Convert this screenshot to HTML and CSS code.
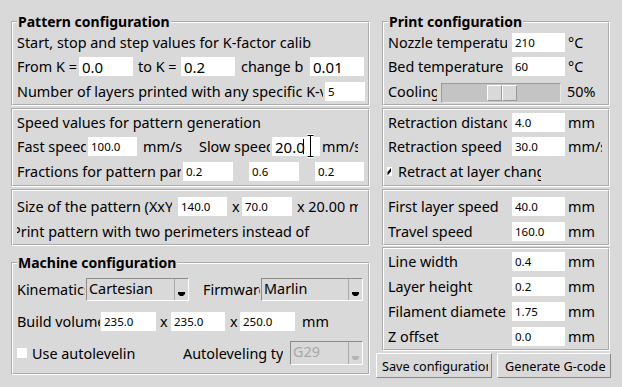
FILE: index.html
```html
<!DOCTYPE html>
<html lang="en">
<head>
    <meta charset="UTF-8">
    <meta name="viewport" content="width=device-width, initial-scale=1.0">
    <title>K-factor calibration</title>
    <link rel="stylesheet" href="styles.css">
</head>
<body>
    <div class="column">
        <fieldset class="group">
            <legend>Pattern configuration</legend>
            <div class="row short">
                <span class="lbl intro">Start, stop and step values for K-factor calibration</span>
            </div>
            <div class="row">
                <span class="lbl from-k">From K =</span>
                <input class="entry big k-entry" value="0.0">
                <span class="lbl to-k">to K =</span>
                <input class="entry big k-entry" value="0.2">
                <span class="lbl step-k">change by</span>
                <input class="entry big k-entry" value="0.01">
            </div>
            <div class="row">
                <span class="lbl layers">Number of layers printed with any specific K-value</span>
                <input class="entry layers-entry" value="5">
            </div>
        </fieldset>

        <div class="group frame">
            <div class="row short">
                <span class="lbl">Speed values for pattern generation</span>
            </div>
            <div class="row">
                <span class="lbl fast">Fast speed</span>
                <input class="entry fast-entry" value="100.0">
                <span class="lbl fast-unit">mm/s</span>
                <span class="lbl slow">Slow speed</span>
                <span class="entry-wrap">
                    <input class="entry big slow-entry" value="20.0">
                    <span class="caret"></span>
                    <svg class="ibeam" width="9" height="24" viewBox="0 0 9 24">
                        <path d="M1 1.5h7M1 22.5h7M4.5 1.5v21" stroke="#fff" stroke-width="3" fill="none"/>
                        <path d="M1.5 1.5h6M1.5 22.5h6M4.5 1.5v21" stroke="#000" stroke-width="1" fill="none"/>
                    </svg>
                </span>
                <span class="lbl slow-unit">mm/s</span>
            </div>
            <div class="row">
                <span class="lbl fractions">Fractions for pattern parts</span>
                <input class="entry frac-entry" value="0.2">
                <input class="entry frac-entry gap" value="0.6">
                <input class="entry frac-entry gap last" value="0.2">
            </div>
        </div>

        <div class="group frame third">
            <div class="row">
                <span class="lbl size">Size of the pattern (XxY)</span>
                <input class="entry size-entry" value="140.0">
                <span class="lbl times">x</span>
                <input class="entry size-entry wide" value="70.0">
                <span class="lbl size-z">x 20.00 mm</span>
            </div>
            <div class="row">
                <span class="lbl perimeters">Print pattern with two perimeters instead of one</span>
            </div>
        </div>

        <fieldset class="group machine">
            <legend>Machine configuration</legend>
            <div class="row tall">
                <span class="lbl kinematics">Kinematics</span>
                <div class="combo kin-combo">
                    <span class="combo-text">Cartesian</span>
                    <span class="combo-arrow"><svg width="7" height="4" viewBox="0 0 7 4"><path d="M0 0h7v2l-2 2h-3l-2-2z" fill="#000"/></svg></span>
                </div>
                <span class="lbl firmware">Firmware</span>
                <div class="combo fw-combo">
                    <span class="combo-text">Marlin</span>
                    <span class="combo-arrow"><svg width="7" height="4" viewBox="0 0 7 4"><path d="M0 0h7v2l-2 2h-3l-2-2z" fill="#000"/></svg></span>
                </div>
            </div>
            <div class="row tall">
                <span class="lbl volume">Build volume</span>
                <input class="entry vol-entry" value="235.0">
                <span class="lbl times vol-x">x</span>
                <input class="entry vol-entry mid" value="235.0">
                <span class="lbl times">x</span>
                <input class="entry vol-entry" value="250.0">
                <span class="lbl vol-unit">mm</span>
            </div>
            <div class="row tall">
                <span class="check"></span>
                <span class="lbl autolevel">Use autoleveling</span>
                <span class="lbl autolevel-type">Autoleveling type</span>
                <div class="combo al-combo disabled">
                    <span class="combo-text">G29</span>
                    <span class="combo-arrow"><svg width="7" height="4" viewBox="0 0 7 4"><path d="M0 0h7v2l-2 2h-3l-2-2z" fill="#b4b4b4"/></svg></span>
                </div>
            </div>
        </fieldset>
    </div>

    <div class="column">
        <fieldset class="group">
            <legend>Print configuration</legend>
            <div class="row short">
                <span class="lbl setting">Nozzle temperature</span>
                <input class="entry set-entry" value="210">
                <span class="unit">°C</span>
            </div>
            <div class="row">
                <span class="lbl setting">Bed temperature</span>
                <input class="entry set-entry" value="60">
                <span class="unit">°C</span>
            </div>
            <div class="row">
                <span class="lbl cooling">Cooling fan</span>
                <div class="scale">
                    <span class="slider"><span></span><span></span></span>
                </div>
                <span class="unit percent">50%</span>
            </div>
        </fieldset>

        <div class="group frame">
            <div class="row short">
                <span class="lbl setting">Retraction distance</span>
                <input class="entry set-entry" value="4.0">
                <span class="unit">mm</span>
            </div>
            <div class="row">
                <span class="lbl setting">Retraction speed</span>
                <input class="entry set-entry" value="30.0">
                <span class="lbl unit speed-unit">mm/s</span>
            </div>
            <div class="row">
                <span class="check-clip"><svg width="5" height="9" viewBox="0 0 5 9"><rect width="5" height="9" fill="#fff"/><path d="M0.5 5L4 1v3.5L0.5 8.5z" fill="#000"/></svg></span>
                <span class="lbl retract">Retract at layer change</span>
            </div>
        </div>

        <div class="group frame third">
            <div class="row">
                <span class="lbl setting">First layer speed</span>
                <input class="entry set-entry" value="40.0">
                <span class="unit">mm</span>
            </div>
            <div class="row">
                <span class="lbl setting">Travel speed</span>
                <input class="entry set-entry" value="160.0">
                <span class="unit">mm</span>
            </div>
        </div>

        <div class="group frame fourth">
            <div class="row">
                <span class="lbl setting">Line width</span>
                <input class="entry set-entry" value="0.4">
                <span class="unit">mm</span>
            </div>
            <div class="row">
                <span class="lbl setting">Layer height</span>
                <input class="entry set-entry" value="0.2">
                <span class="unit">mm</span>
            </div>
            <div class="row">
                <span class="lbl setting">Filament diameter</span>
                <input class="entry set-entry" value="1.75">
                <span class="unit">mm</span>
            </div>
            <div class="row">
                <span class="lbl setting">Z offset</span>
                <input class="entry set-entry" value="0.0">
                <span class="unit">mm</span>
            </div>
        </div>

        <div class="buttons">
            <button class="button save"><span class="button-text">Save configuration</span></button>
            <button class="button generate"><span class="button-text">Generate G-code</span></button>
        </div>
    </div>
</body>
</html>
```

FILE: styles.css
```css
html, body {
    height: 100%;
}
body {
    margin: 0;
    padding: 14px 0 0 11px;
    box-sizing: border-box;
    background-color: #d9d9d9;
    color: #000;
    font-family: 'Noto Sans', sans-serif;
    font-size: 14.4px;
    display: grid;
    grid-template-columns: 359px 228px;
    column-gap: 12px;
    align-items: start;
    overflow: hidden;
}
.column {
    display: flex;
    flex-direction: column;
}

/* frames, groove border like Tk */
.group {
    margin: 0;
    padding: 0 2px 0 4px;
    border: 2px groove #fff;
    min-width: 0;
}
.group legend {
    padding: 0 1px;
    font-weight: bold;
    font-size: 14px;
    line-height: 16px;
}
.frame {
    margin-top: 2px;
    padding-bottom: 1px;
}
.frame.third {
    padding-top: 3px;
    padding-bottom: 0;
}
.frame.fourth {
    margin-top: 1px;
    padding-bottom: 0;
}
.machine {
    margin-top: 9px;
    padding-top: 2px;
    padding-bottom: 4px;
}

.row {
    display: flex;
    align-items: center;
    height: 25px;
    white-space: nowrap;
}
.row.short {
    height: 24px;
}
.row.tall {
    height: 32px;
}

/* labels are cut at a fixed width, like Tk labels */
.lbl {
    flex: none;
    overflow: hidden;
    white-space: nowrap;
}
.intro { width: 295px; }
.from-k { width: 62px; }
.to-k { width: 43px; padding-left: 5px; }
.step-k { width: 62px; padding-left: 6px; margin-right: 7px; }
.layers { width: 306px; margin-right: 2px; }
.fast { width: 69px; margin-right: 2px; }
.fast-unit { width: 40px; padding-left: 6px; }
.slow { width: 71px; padding-left: 16px; margin-right: 2px; }
.slow-unit { width: 36px; padding-left: 2px; }
.fractions { width: 164px; margin-right: 2px; }
.size { width: 155px; margin-right: 6px; }
.times { width: 10px; padding-left: 5px; }
.vol-x { width: 11px; padding-left: 4px; }
.size-z { width: 61px; padding-left: 5px; }
.perimeters { width: 294px; text-indent: -5px; }
.kinematics { width: 68px; margin-right: 1px; }
.firmware { width: 57px; padding-left: 14px; margin-right: 1px; }
.volume { width: 83px; margin-right: 1px; }
.vol-unit { padding-left: 7px; }
.autolevel { width: 104px; margin-left: 5px; }
.autolevel-type { width: 100px; margin-left: 47px; margin-right: 7px; }
.setting { width: 119px; margin-right: 5px; }
.cooling { width: 49px; margin-right: 4px; }
.speed-unit { width: 34px; }
.retract { width: 143px; margin-left: 6px; }

.unit {
    padding-left: 3px;
}
.unit.percent {
    padding-left: 6px;
}

/* entries */
.entry {
    flex: none;
    box-sizing: border-box;
    height: 19px;
    margin: 0;
    border: 0;
    padding: 0 0 0 3px;
    background: #fff;
    color: #000;
    font-family: 'Noto Sans', sans-serif;
    font-size: 11.5px;
    outline: none;
}
.entry.big {
    font-size: 15px;
}
.k-entry { width: 54px; }
.layers-entry { width: 40px; }
.fast-entry { width: 49px; }
.frac-entry { width: 50px; }
.frac-entry.gap { margin-left: 16px; }
.frac-entry.last { width: 49px; }
.size-entry { width: 49px; }
.size-entry.wide { width: 50px; }
.vol-entry { width: 55px; }
.vol-entry.mid { width: 54px; }
.set-entry { width: 53px; }

.entry-wrap {
    position: relative;
    display: flex;
}
.slow-entry { width: 48px; }
.caret {
    position: absolute;
    left: 31px;
    top: 2px;
    width: 1px;
    height: 15px;
    background: #000;
}
.ibeam {
    position: absolute;
    left: 34px;
    top: -3px;
}

/* combobox */
.combo {
    flex: none;
    display: flex;
    box-sizing: border-box;
    height: 23px;
    border: 1px solid;
    border-color: #8d8d8d #fff #fff #8d8d8d;
}
.combo-text {
    flex: 1;
    padding-left: 2px;
    line-height: 20px;
    overflow: hidden;
}
.combo-arrow {
    width: 14px;
    border-left: 1px solid #a9a9a9;
    display: flex;
    justify-content: center;
    align-items: flex-end;
    padding-bottom: 4px;
    box-sizing: border-box;
}
.kin-combo { width: 103px; }
.fw-combo { width: 102px; }
.al-combo { width: 73px; height: 24px; }
.combo.disabled .combo-text {
    color: #a8a8a8;
}

/* checkboxes */
.check {
    flex: none;
    width: 10px;
    height: 10px;
    background: #fff;
}
.check-clip {
    flex: none;
    display: flex;
    margin-left: -1px;
}

/* cooling fan scale */
.scale {
    flex: none;
    display: flex;
    align-items: center;
    box-sizing: border-box;
    width: 120px;
    height: 20px;
    margin-top: 2px;
    padding-left: 45px;
    background: #c4c4c4;
    border: 1px solid;
    border-color: #9a9a9a #e8e8e8 #e8e8e8 #9a9a9a;
}
.slider {
    display: flex;
}
.slider span {
    box-sizing: border-box;
    width: 15px;
    height: 16px;
    background: #d9d9d9;
    border: 1px solid;
    border-color: #fff #9a9a9a #9a9a9a #fff;
}

/* buttons */
.buttons {
    display: flex;
    gap: 5px;
    margin: 2px -1px 0 -6px;
}
.button {
    box-sizing: border-box;
    display: flex;
    align-items: center;
    height: 25px;
    padding: 0 0 0 5px;
    background-color: #d9d9d9;
    border: 1px solid;
    border-color: #fff #8a8a8a #8a8a8a #fff;
    color: #000;
    font-family: 'Noto Sans', sans-serif;
    font-size: 12.7px;
    white-space: nowrap;
}
.button-text {
    overflow: hidden;
}
.button.save { width: 116px; }
.button.save .button-text { width: 106px; }
.button.generate { width: 114px; padding-left: 7px; }
```
